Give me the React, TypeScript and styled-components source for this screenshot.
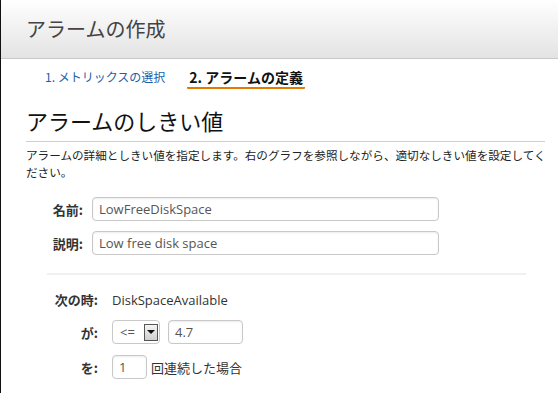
import React from 'react';
import styled, { createGlobalStyle } from 'styled-components';

const GlobalStyle = createGlobalStyle`
  html, body {
    margin: 0;
    padding: 0;
    background: #fff;
  }
  body {
    font-family: "Noto Sans CJK JP", "Noto Sans", sans-serif;
    color: #222;
  }
`;

const Page = styled.div`
  width: 558px;
  height: 393px;
  box-sizing: border-box;
  border-left: 1px solid #111;
  overflow: hidden;
`;

const Header = styled.div`
  height: 59px;
  box-sizing: border-box;
  padding-left: 25px;
  display: flex;
  align-items: center;
  background: linear-gradient(to bottom, #ffffff 0%, #f2f2f2 45%, #e3e3e3 100%);
  border-bottom: 1px solid #c9c9c9;
`;

const Title = styled.h1`
  margin: 0;
  font-size: 20px;
  font-weight: normal;
  color: #444;
  line-height: 1;
`;

const Steps = styled.div`
  display: flex;
  align-items: flex-end;
  gap: 20px;
  padding: 9px 0 0 42px;
  height: 21px;
`;

const Step = styled.div<{ $active?: boolean }>`
  font-size: ${p => (p.$active ? '14px' : '12px')};
  font-weight: ${p => (p.$active ? 'bold' : 'normal')};
  color: ${p => (p.$active ? '#111' : '#1d5ea8')};
  line-height: 16px;
  padding: 0 2px 2px;
  border-bottom: ${p => (p.$active ? '2px solid #e07b00' : '2px solid transparent')};
  border-radius: 1px;
`;

const Content = styled.div`
  padding: 0 0 0 25px;
`;

const Heading = styled.h2`
  margin: 16px 0 0;
  font-size: 22px;
  font-weight: normal;
  color: #111;
  line-height: 30px;
  padding-bottom: 6px;
  border-bottom: 1px solid #cfcfcf;
  margin-right: 13px;
`;

const Description = styled.p`
  margin: 5px 0 0;
  font-size: 11.6px;
  line-height: 17px;
  color: #222;
  width: 524px;
`;

const FieldGrid = styled.div<{ $labelWidth: number }>`
  display: grid;
  grid-template-columns: ${p => p.$labelWidth}px auto;
  column-gap: 9px;
  align-items: center;
`;

const NameGrid = styled(FieldGrid)`
  margin-top: 16px;
  row-gap: 10px;
`;

const ConditionGrid = styled(FieldGrid)`
  margin-top: 15px;
  row-gap: 11px;
  column-gap: 14px;
`;

const Label = styled.div`
  text-align: right;
  font-size: 13px;
  font-weight: bold;
  color: #333;
  white-space: nowrap;
`;

const TextInput = styled.div<{ $width: number }>`
  width: ${p => p.$width}px;
  height: 24px;
  box-sizing: border-box;
  border: 1px solid #c8c8c8;
  border-radius: 4px;
  box-shadow: inset 0 1px 2px rgba(0, 0, 0, 0.08);
  padding: 0 6px;
  display: flex;
  align-items: center;
  font-family: "Open Sans", "Noto Sans", sans-serif;
  font-size: 13px;
  color: #555;
  background: #fff;
`;

const Divider = styled.div`
  height: 2px;
  background: #f0f0f0;
  margin: 18px 32px 0 21px;
`;

const Value = styled.div`
  font-family: "Open Sans", "Noto Sans", sans-serif;
  font-size: 13px;
  color: #333;
`;

const Inline = styled.div`
  display: flex;
  align-items: center;
  gap: 8px;
`;

const SelectBox = styled.div`
  width: 48px;
  height: 24px;
  box-sizing: border-box;
  border: 1px solid #c8c8c8;
  border-radius: 4px;
  display: flex;
  align-items: center;
  justify-content: space-between;
  padding: 0 1px 0 7px;
  font-family: "Open Sans", "Noto Sans", sans-serif;
  font-size: 13px;
  color: #555;
`;

const SelectArrow = styled.div`
  width: 14px;
  height: 17px;
  box-sizing: border-box;
  border: 1px solid #555;
  background: linear-gradient(to bottom, #f4f4f4, #cfcfcf);
  display: flex;
  align-items: center;
  justify-content: center;
  &::after {
    content: '';
    border-left: 4px solid transparent;
    border-right: 4px solid transparent;
    border-top: 4px solid #111;
  }
`;

const Suffix = styled.span`
  font-size: 13px;
  color: #333;
  margin-left: -4px;
`;

export default function App() {
  return (
    <>
      <GlobalStyle />
      <Page>
        <Header>
          <Title>アラームの作成</Title>
        </Header>
        <Steps>
          <Step>1. メトリックスの選択</Step>
          <Step $active>2. アラームの定義</Step>
        </Steps>
        <Content>
          <Heading>アラームのしきい値</Heading>
          <Description>
            アラームの詳細としきい値を指定します。右のグラフを参照しながら、適切なしきい値を設定してください。
          </Description>
          <NameGrid $labelWidth={57}>
            <Label>名前:</Label>
            <TextInput $width={347}>LowFreeDiskSpace</TextInput>
            <Label>説明:</Label>
            <TextInput $width={347}>Low free disk space</TextInput>
          </NameGrid>
          <Divider />
          <ConditionGrid $labelWidth={72}>
            <Label>次の時:</Label>
            <Value>DiskSpaceAvailable</Value>
            <Label>が:</Label>
            <Inline>
              <SelectBox>
                &lt;=
                <SelectArrow />
              </SelectBox>
              <TextInput $width={75}>4.7</TextInput>
            </Inline>
            <Label>を:</Label>
            <Inline>
              <TextInput $width={35}>1</TextInput>
              <Suffix>回連続した場合</Suffix>
            </Inline>
          </ConditionGrid>
        </Content>
      </Page>
    </>
  );
}
